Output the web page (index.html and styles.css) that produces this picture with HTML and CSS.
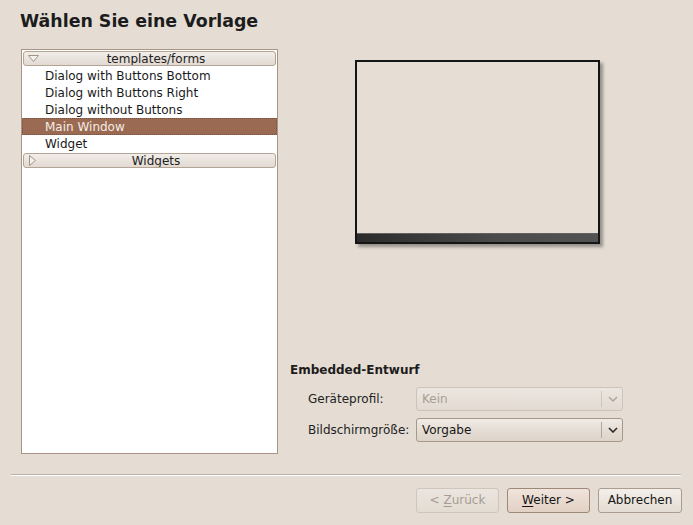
FILE: index.html
```html
<!DOCTYPE html>
<html>
<head>
<meta charset="utf-8">
<link rel="stylesheet" href="styles.css">
</head>
<body>
<div class="page">
  <h1 class="title">Wählen Sie eine Vorlage</h1>
  <div class="main">
    <div class="tree">
      <div class="row header-row"><div class="hbox"><svg class="tri" width="11" height="8" viewBox="0 0 11 8"><path d="M0.5 0.5 L10.5 0.5 L5.5 6.5 Z" fill="#f4f0ec" stroke="#a49484"/></svg><span>templates/forms</span></div></div>
      <div class="row item">Dialog with Buttons Bottom</div>
      <div class="row item">Dialog with Buttons Right</div>
      <div class="row item">Dialog without Buttons</div>
      <div class="row item selected">Main Window</div>
      <div class="row item">Widget</div>
      <div class="row header-row"><div class="hbox"><svg class="tri tri-r" width="8" height="11" viewBox="0 0 8 11"><path d="M0.5 0.5 L6.5 5.5 L0.5 10.5 Z" fill="#f4f0ec" stroke="#a49484"/></svg><span>Widgets</span></div></div>
    </div>
    <div class="right">
      <div class="preview"><div class="preview-bar"></div></div>
      <div class="embedded">
        <div class="section-title">Embedded-Entwurf</div>
        <div class="form">
          <div class="label">Geräteprofil:</div>
          <div class="combo disabled"><span class="cv">Kein</span><span class="csep"></span><svg class="chev" width="10" height="6" viewBox="0 0 10 6"><path d="M1 1 L5 5 L9 1" fill="none" stroke="#b0a89e" stroke-width="1.5"/></svg></div>
          <div class="label">Bildschirmgröße:</div>
          <div class="combo"><span class="cv">Vorgabe</span><span class="csep"></span><svg class="chev" width="10" height="6" viewBox="0 0 10 6"><path d="M1 1 L5 5 L9 1" fill="none" stroke="#2a2a2a" stroke-width="1.6"/></svg></div>
        </div>
      </div>
    </div>
  </div>
  <div class="separator"></div>
  <div class="buttons">
    <div class="btn disabled">&lt; <u>Z</u>urück</div>
    <div class="btn default"><u>W</u>eiter &gt;</div>
    <div class="btn">Abbrechen</div>
  </div>
</div>
</body>
</html>
```

FILE: styles.css
```css
html, body {
  margin: 0;
  padding: 0;
}
body {
  background: #e5ddd4;
  font-family: "DejaVu Sans", sans-serif;
  font-size: 12px;
  color: #141414;
}
.page {
  width: 693px;
  height: 525px;
  overflow: hidden;
}
.title {
  margin: 0;
  padding: 11px 0 0 20px;
  font-size: 17.4px;
  font-weight: bold;
  line-height: 21px;
  color: #1c1c1c;
}
.main {
  display: flex;
  margin-top: 17px;
  padding-left: 21px;
  height: 405px;
}
.tree {
  width: 255px;
  height: 402px;
  padding-top: 1px;
  border: 1px solid #a89484;
  background: #ffffff;
}
.row {
  height: 17px;
  line-height: 17px;
  white-space: nowrap;
  box-sizing: border-box;
}
.item {
  padding-left: 23px;
  padding-top: 1px;
  color: #1a1a1a;
}
.item.selected {
  background: #9b6a52;
  color: #f3ece6;
  outline: 1px dotted #7a5240;
  outline-offset: -1px;
}
.header-row {
  height: 16px;
  padding: 0 1px 1px 1px;
}
.header-row:last-child {
  margin-top: 1px;
}
.hbox {
  position: relative;
  height: 13px;
  border: 1px solid #b4a494;
  border-radius: 3px;
  background: linear-gradient(#f1ede9, #e2dad2);
  text-align: center;
  line-height: 15px;
  padding-left: 13px;
  color: #222;
  overflow: hidden;
}
.tri {
  position: absolute;
  left: 4px;
  top: 3px;
}
.tri-r {
  left: 5px;
  top: 1px;
}
.right {
  flex: 1;
  padding-left: 12px;
}
.preview {
  margin: 11px 0 0 65px;
  width: 241px;
  height: 180px;
  border: 2px solid #151515;
  background: #e6ddd4;
  box-shadow: 3px 3px 3px rgba(0,0,0,0.35);
  display: flex;
  flex-direction: column;
  justify-content: flex-end;
}
.preview-bar {
  height: 8px;
  border-top: 1px solid #626262;
  background: linear-gradient(to right, #2b2b2b, #4c4c4c 60%, #525252);
}
.embedded {
  margin-top: 119px;
}
.section-title {
  font-weight: bold;
  line-height: 15px;
  color: #1c1c1c;
}
.form {
  display: grid;
  grid-template-columns: 108px 207px;
  row-gap: 7px;
  margin-top: 9px;
  padding-left: 18px;
  align-items: center;
}
.label {
  color: #222;
}
.combo {
  position: relative;
  height: 22px;
  border: 1px solid #a89888;
  border-radius: 3px;
  background: linear-gradient(#f0ebe6, #e3dbd2 60%, #ddd3c9);
  display: flex;
  align-items: center;
  box-sizing: content-box;
}
.combo.disabled {
  border-color: #cdc3b8;
  background: linear-gradient(#ece6e0, #e3dbd2);
}
.combo.disabled .cv {
  color: #a89e94;
}
.cv {
  flex: 1;
  padding-left: 5px;
  color: #151515;
}
.csep {
  width: 1px;
  height: 16px;
  background: #b3a698;
  margin-right: 6px;
}
.combo.disabled .csep {
  background: #cfc6bc;
}
.chev {
  margin-right: 4px;
}
.separator {
  margin: 20px 12px 0 11px;
  height: 1px;
  border-top: 1px solid #bab2aa;
  background: #ffffff;
}
.buttons {
  display: flex;
  justify-content: flex-end;
  gap: 8px;
  padding-right: 11px;
  margin-top: 12px;
}
.btn {
  width: 81px;
  height: 23px;
  line-height: 23px;
  text-align: center;
  border: 1px solid #aa9c8e;
  border-radius: 3px;
  background: linear-gradient(#f3efea, #e4dcd3);
  color: #151515;
}
.btn:last-child {
  width: 82px;
}
.btn.default {
  border-color: #9e8878;
  background: linear-gradient(#f0e4dc, #e2d0c4);
}
.btn.disabled {
  color: #a69c92;
  border-color: #cfc5ba;
  background: linear-gradient(#ebe5df, #e4dcd3);
}
.btn u {
  text-decoration-thickness: 1px;
  text-underline-offset: 2px;
}
```
